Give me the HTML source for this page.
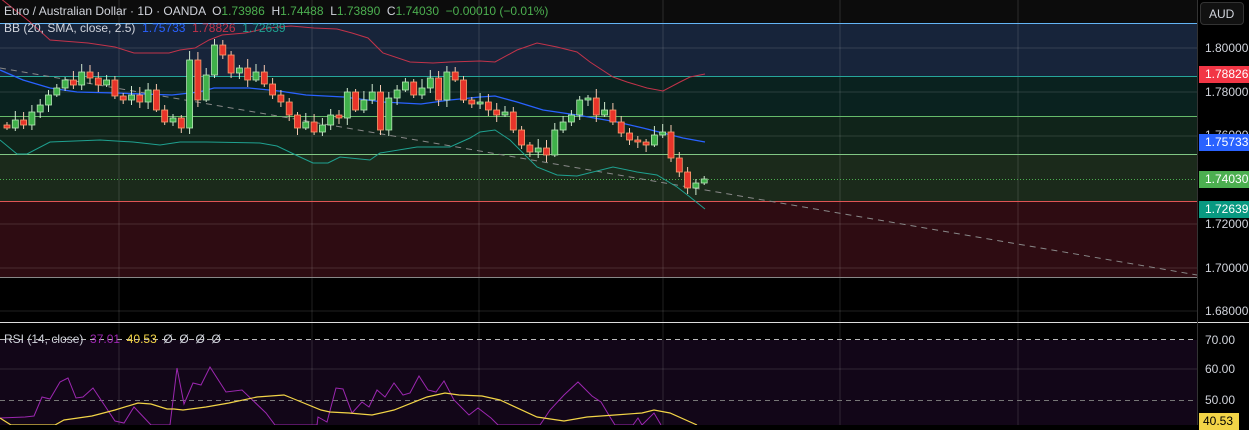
<!DOCTYPE html>
<html><head><meta charset="utf-8"><style>
body{margin:0;background:#000;width:1249px;height:425px;overflow:hidden;font-family:"Liberation Sans",sans-serif;position:relative}
.t{position:absolute;font-size:12px;color:#d1d4dc;white-space:nowrap}
.tag{position:absolute;left:1199px;width:50px;height:17px;font-size:12px;line-height:17px;color:#fff;box-sizing:border-box}
.ax{position:absolute;left:1205px;font-size:12px;color:#d1d4dc}
</style></head><body>
<svg width="1249" height="425" style="position:absolute;left:0;top:0">
<rect x="0" y="0" width="1197" height="23" fill="#0c0c0c"/>
<rect x="0" y="23" width="1197" height="53" fill="#17243a"/>
<rect x="0" y="76" width="1197" height="40" fill="#0a221f"/>
<rect x="0" y="116" width="1197" height="38" fill="#10241a"/>
<rect x="0" y="154" width="1197" height="47" fill="#1b2a1b"/>
<rect x="0" y="201" width="1197" height="76" fill="#2e0c12"/>
<rect x="0" y="340" width="1197" height="85" fill="#120618"/>
<g stroke="#ffffff" stroke-opacity="0.13" stroke-width="1">
<line x1="119" y1="0" x2="119" y2="425"/><line x1="312" y1="0" x2="312" y2="425"/><line x1="479" y1="0" x2="479" y2="425"/><line x1="663" y1="0" x2="663" y2="425"/><line x1="840" y1="0" x2="840" y2="425"/><line x1="1018" y1="0" x2="1018" y2="425"/>
<line x1="0" y1="48" x2="1197" y2="48"/><line x1="0" y1="92" x2="1197" y2="92"/><line x1="0" y1="136" x2="1197" y2="136"/><line x1="0" y1="224" x2="1197" y2="224"/><line x1="0" y1="268" x2="1197" y2="268"/><line x1="0" y1="311" x2="1197" y2="311"/>
<line x1="0" y1="369" x2="1197" y2="369"/>
</g>
<line x1="0" y1="23.5" x2="1197" y2="23.5" stroke="#64b5f6"/>
<line x1="0" y1="76.5" x2="1197" y2="76.5" stroke="#26a69a"/>
<line x1="0" y1="116.5" x2="1197" y2="116.5" stroke="#66bb6a"/>
<line x1="0" y1="154.5" x2="1197" y2="154.5" stroke="#81c784"/>
<line x1="0" y1="201.5" x2="1197" y2="201.5" stroke="#e05555"/>
<line x1="0" y1="277.5" x2="1197" y2="277.5" stroke="#888"/>
<line x1="0" y1="179.5" x2="1197" y2="179.5" stroke="#4caf50" stroke-dasharray="1 2"/>
<line x1="0" y1="68" x2="1197" y2="275" stroke="#888" stroke-dasharray="6 5"/>
<line x1="0" y1="339.5" x2="1197" y2="339.5" stroke="#bbb" stroke-dasharray="5 4"/>
<line x1="0" y1="400.5" x2="1197" y2="400.5" stroke="#777" stroke-dasharray="5 4"/>
<line x1="0" y1="322.5" x2="1249" y2="322.5" stroke="#ddd"/>
<line x1="1197.5" y1="0" x2="1197.5" y2="425" stroke="#333"/>
<polyline fill="none" stroke="#c2334a" stroke-width="1" points="0,-2 30,22 50,40 88,43 115,47 134,53 169,53 180,50 195,48 209,40 222,35 245,33 268,28 291,26 314,28 337,29 352,33 368,38 383,53 410,62 433,63 450,62 480,61 495,62 517,50 537,43 557,47 577,52 590,62 613,77 627,82 647,88 663,91 680,82 690,77 705,74"/>
<polyline fill="none" stroke="#2962ff" stroke-width="1.3" points="0,70 23,80 50,88 77,92 115,93 172,95 199,92 214,88 249,88 279,91 306,95 344,97 383,102 421,104 450,100 480,97 495,96 517,102 543,110 577,115 617,122 643,128 663,133 683,138 705,142"/>
<polyline fill="none" stroke="#1fa190" stroke-width="1" points="0,140 17,154 27,154 50,142 100,140 133,142 160,145 180,142 207,142 260,143 277,146 300,157 313,163 328,163 340,157 370,160 380,153 417,147 450,147 470,138 480,132 495,130 510,140 537,167 557,175 577,176 593,172 613,167 637,172 657,175 677,187 690,197 705,209"/>
<g id="cg"></g>
<polyline fill="none" stroke="#9c27b0" stroke-width="1" points="0,418 25,417 34,416 42,397 50,399 60,382 68,378 76,398 83,397 93,388 101,400 115,421 124,423 134,407 151,425 170,425 177,368 184,404 193,383 201,385 210,367 226,392 242,390 266,413 275,425 317,425 318,417 327,422 336,388 343,389 352,413 362,402 369,407 377,390 385,397 394,383 403,395 410,393 419,376 428,390 436,392 444,381 454,400 469,415 478,408 491,418 498,425 540,425 550,410 564,395 578,382 592,396 601,402 610,417 615,425 633,425 638,418 642,425 654,413 661,425"/>
<polyline fill="none" stroke="#f2d447" stroke-width="1.2" points="0,418 11,425 55,425 64,420 78,418 92,416 115,410 138,403 151,404 167,409 174,409 183,410 206,407 229,403 257,397 284,395 294,399 321,410 330,412 349,413 372,415 394,410 427,397 445,393 459,395 482,396 500,400 537,417 564,421 587,417 615,415 642,413 654,410 670,413 697,425"/>
</svg>
<div class="t" style="left:4px;top:4px">Euro / Australian Dollar · 1D · OANDA &nbsp;O<span style="color:#4caf50">1.73986</span> &nbsp;H<span style="color:#4caf50">1.74488</span> &nbsp;L<span style="color:#4caf50">1.73890</span> &nbsp;C<span style="color:#4caf50">1.74030</span> &nbsp;<span style="color:#4caf50">−0.00010 (−0.01%)</span></div>
<div class="t" style="left:4px;top:21px">BB (20, SMA, close, 2.5) &nbsp;<span style="color:#2962ff">1.75733</span> &nbsp;<span style="color:#c2334a">1.78826</span> &nbsp;<span style="color:#1fa190">1.72639</span></div>
<div class="t" style="left:4px;top:332px">RSI (14, close) &nbsp;<span style="color:#9c27b0">37.01</span> &nbsp;<span style="color:#f2d447">40.53</span> &nbsp;Ø &nbsp;Ø &nbsp;Ø &nbsp;Ø</div>
<div style="position:absolute;left:1200px;top:2px;width:44px;height:23px;border:1px solid #333;border-radius:4px;background:#111;color:#d1d4dc;font-size:12px;line-height:23px;padding-left:8px;box-sizing:border-box">AUD</div>
<div class="ax" style="top:41px">1.80000</div>
<div class="ax" style="top:85px">1.78000</div>
<div class="ax" style="top:128px">1.76000</div>
<div class="ax" style="top:217px">1.72000</div>
<div class="ax" style="top:261px">1.70000</div>
<div class="ax" style="top:304px">1.68000</div>
<div class="ax" style="top:333px">70.00</div>
<div class="ax" style="top:362px">60.00</div>
<div class="ax" style="top:393px">50.00</div>
<div class="tag" style="top:66px;background:#f23645;padding-left:6px">1.78826</div>
<div class="tag" style="top:134px;background:#2962ff;padding-left:6px">1.75733</div>
<div class="tag" style="top:171px;background:#4caf50;padding-left:6px">1.74030</div>
<div class="tag" style="top:201px;background:#089981;padding-left:6px">1.72639</div>
<div class="tag" style="top:413px;left:1199px;width:40px;background:#f2d447;color:#000;padding-left:4px">40.53</div>
<script>
(function(){
var cl=[128,120,125,112,105,95,88,80,85,72,78,85,80,96,100,95,102,90,110,122,118,128,60,100,75,45,55,73,68,80,72,84,95,102,115,128,122,132,125,115,118,92,110,100,92,130,98,90,82,95,88,78,100,72,80,100,104,102,110,115,112,130,145,152,148,155,130,122,115,100,98,115,110,122,133,140,142,145,135,132,158,172,188,183,179];
var NS="http://www.w3.org/2000/svg",gp=document.getElementById("cg"),pv=125;
function el(n,a){var e=document.createElementNS(NS,n);for(var q in a)e.setAttribute(q,String(a[q]));gp.appendChild(e);}
for(var i=0;i<cl.length;i++){
 var x=7+i*8.3,cc=cl[i],oo=pv,up=cc<oo;
 var tp=Math.min(oo,cc),bt=Math.max(oo,cc);if(bt-tp<2)bt=tp+2;
 var hi=tp-3-((i*13)%7),lo=bt+2+((i*7)%6);
 el("line",{x1:x,y1:hi,x2:x,y2:lo,stroke:up?"#cfe8cf":"#f4c8b0"});
 el("rect",{x:x-3,y:tp,width:6,height:bt-tp,fill:up?"#3fb04a":"#e8342a",stroke:up?"#b8e6b8":"#f7a070","stroke-width":0.8});
 pv=cc;}
})();
</script>
</body></html>
